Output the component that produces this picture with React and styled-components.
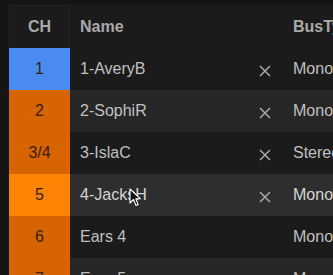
import React from "react";
import styled, { createGlobalStyle } from "styled-components";

const GlobalStyle = createGlobalStyle`
  html, body {
    margin: 0;
    padding: 0;
    background: #151515;
    overflow: hidden;
  }
  body {
    font-family: "Liberation Sans", Arial, sans-serif;
  }
`;

const rows = [
  { ch: "1", name: "1-AveryB", bus: "Mono", color: "#4a8bf0", x: true },
  { ch: "2", name: "2-SophiR", bus: "Mono", color: "#d66400", x: true },
  { ch: "3/4", name: "3-IslaC", bus: "Stereo", color: "#d66400", x: true },
  { ch: "5", name: "4-JacksH", bus: "Mono", color: "#ff8405", x: true, hover: true },
  { ch: "6", name: "Ears 4", bus: "Mono", color: "#d66400" },
  { ch: "7", name: "Ears 5", bus: "Mono", color: "#d66400" },
];

function CloseIcon() {
  return (
    <svg width="12" height="12" viewBox="0 0 12 12">
      <path d="M1 1 L11 11 M11 1 L1 11" stroke="#a8a8a8" strokeWidth="1.5" fill="none" />
    </svg>
  );
}

function Cursor() {
  return (
    <svg width="14" height="20" viewBox="0 0 14 20">
      <path
        d="M1 1 L1 15 L4.5 11.5 L7 17.5 L9.2 16.6 L6.8 10.8 L11.5 10.8 Z"
        fill="#111"
        stroke="#fff"
        strokeWidth="1.1"
        strokeLinejoin="round"
      />
    </svg>
  );
}

function App() {
  return (
    <>
      <GlobalStyle />
      <Page>
        <Table>
          <HeaderRow>
            <ChHead>CH</ChHead>
            <NameHead>Name</NameHead>
            <XCell />
            <BusHead>BusType</BusHead>
          </HeaderRow>
          {rows.map((r, i) => (
            <Row key={r.ch} $alt={i % 2 === 1} $hover={r.hover}>
              <ChCell $color={r.color}>{r.ch}</ChCell>
              <NameCell>
                {r.name}
                {r.hover && (
                  <CursorWrap>
                    <Cursor />
                  </CursorWrap>
                )}
              </NameCell>
              <XCell>{r.x && <CloseIcon />}</XCell>
              <BusCell>{r.bus}</BusCell>
            </Row>
          ))}
        </Table>
      </Page>
    </>
  );
}

export default App;

const Page = styled.div`
  width: 333px;
  height: 275px;
  background: #151515;
  padding-left: 9px;
  box-sizing: border-box;
  overflow: hidden;
`;

const Table = styled.div`
  display: flex;
  flex-direction: column;
  width: 400px;
`;

const HeaderRow = styled.div`
  display: grid;
  grid-template-columns: 61px 184px 22px 1fr;
  height: 43px;
  margin-top: 5px;
  background: #1b1b1b;
  align-items: center;
  font-size: 16px;
  font-weight: bold;
  color: #a9a9a9;
`;

const ChHead = styled.div`
  height: 100%;
  display: flex;
  align-items: center;
  justify-content: center;
  border: 1px solid #222;
  border-bottom: none;
  box-sizing: border-box;
`;

const NameHead = styled.div`
  padding-left: 10px;
`;

const BusHead = styled.div`
  padding-left: 17px;
  white-space: nowrap;
`;

const Row = styled.div`
  display: grid;
  grid-template-columns: 61px 184px 22px 1fr;
  height: 42px;
  align-items: center;
  font-size: 16px;
  color: ${({ $hover }) => ($hover ? "#d4d4d4" : "#c0c0c0")};
  background: ${({ $hover, $alt }) =>
    $hover ? "#2e2e2e" : $alt ? "#262626" : "#1b1b1b"};
`;

const ChCell = styled.div`
  height: 100%;
  display: flex;
  align-items: center;
  justify-content: center;
  background: ${({ $color }) => $color};
  color: #3b1d05;
`;

const NameCell = styled.div`
  position: relative;
  padding-left: 10px;
`;

const CursorWrap = styled.div`
  position: absolute;
  left: 59px;
  top: 2px;
  line-height: 0;
`;

const XCell = styled.div`
  display: flex;
  align-items: center;
  justify-content: center;
  padding-top: 3px;
`;

const BusCell = styled.div`
  padding-left: 17px;
  white-space: nowrap;
`;
